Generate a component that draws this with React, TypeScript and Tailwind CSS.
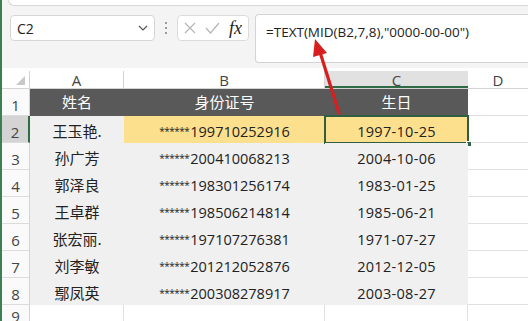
import React from 'react';

const rows = [
  ['王玉艳.', '199710252916', '1997-10-25'],
  ['孙广芳', '200410068213', '2004-10-06'],
  ['郭泽良', '198301256174', '1983-01-25'],
  ['王卓群', '198506214814', '1985-06-21'],
  ['张宏丽.', '197107276381', '1971-07-27'],
  ['刘李敏', '201212052876', '2012-12-05'],
  ['鄢凤英', '200308278917', '2003-08-27'],
];

const cjk = "font-['Noto_Sans_CJK_SC',sans-serif]";
const num = "font-['Open_Sans','Noto_Sans_CJK_SC',sans-serif]";

const RowHead: React.FC<{ n: number; active?: boolean; top?: boolean }> = ({ n, active, top }) => (
  <div
    className={`flex w-[28px] justify-center border-b border-[#dcdcdc] text-[15px] leading-none text-[#444] ${num} ${
      top ? 'items-start pt-[4px]' : 'items-end pb-[2px]'
    } ${active ? 'border-r-2 border-r-[#2f6b45] bg-[#d4d4d4]' : 'border-r border-r-[#d4d4d4] bg-[#fafafa]'}`}
  >
    {n}
  </div>
);

export default function App() {
  return (
    <div className="relative h-[321px] w-[528px] overflow-hidden border-l-2 border-[#3d7f55] bg-white">
      {/* toolbar */}
      <div className="h-[68px] bg-[#f4f4f4]">
        <div className="ml-[6px] h-[6px] rounded-bl-md border-b border-l border-[#d8d8d8] bg-white" />
        <div className="flex items-start">
          <div className="ml-[8px] mt-[9px] flex h-[26px] w-[145px] items-center justify-between rounded border border-[#d6d6d6] bg-white pl-[6px] pr-[6px]">
            <span className={`text-[14px] text-[#222] ${num}`}>C2</span>
            <svg width="10" height="6" viewBox="0 0 10 6">
              <path d="M1 1l4 4 4-4" fill="none" stroke="#555" strokeWidth="1.2" />
            </svg>
          </div>
          <div className="mt-[9px] flex h-[26px] w-[22px] flex-col items-center justify-center gap-[3px]">
            <div className="h-[2px] w-[2px] bg-[#999]" />
            <div className="h-[2px] w-[2px] bg-[#999]" />
            <div className="h-[2px] w-[2px] bg-[#999]" />
          </div>
          <div className="mt-[9px] flex h-[26px] w-[72px] items-center gap-[9px] rounded border border-[#dcdcdc] bg-white pl-[6px]">
            <svg width="12" height="12" viewBox="0 0 12 12">
              <path d="M1 1l10 10M11 1L1 11" stroke="#b5b5b5" strokeWidth="1.2" />
            </svg>
            <svg width="15" height="12" viewBox="0 0 15 12">
              <path d="M1 6l4.5 5L14 1" fill="none" stroke="#b5b5b5" strokeWidth="1.2" />
            </svg>
            <span className="font-['Liberation_Serif',serif] text-[18px] italic leading-none text-[#222]">fx</span>
          </div>
          <div className="ml-[6px] mt-[8px] h-[49px] flex-1 rounded-l border border-r-0 border-[#d4d4d4] bg-white pl-[10px] pt-[4px]">
            <span className={`text-[13.5px] text-[#222] ${num}`}>=TEXT(MID(B2,7,8),"0000-00-00")</span>
          </div>
        </div>
      </div>

      {/* column headers */}
      <div className={`mt-[3px] flex h-[18px] border-b border-[#d4d4d4] text-[15px] leading-[18px] text-[#444] ${num}`}>
        <div className="relative w-[28px] border-r border-[#d4d4d4]">
          <div className="absolute bottom-[3px] right-[4px] h-0 w-0 border-b-[9px] border-l-[9px] border-b-[#c8c8c8] border-l-transparent" />
        </div>
        <div className="w-[94px] border-r border-[#d4d4d4] text-center">A</div>
        <div className="w-[201px] border-r border-[#d4d4d4] text-center">B</div>
        <div className="w-[143px] border-b-2 border-[#2f6b45] bg-[#e1e1e1] text-center">C</div>
        <div className="flex-1 text-center">D</div>
      </div>

      {/* row 1 */}
      <div className="flex h-[27px]">
        <RowHead n={1} />
        <div className={`flex w-[438px] items-center bg-[#595959] text-[15px] text-white ${cjk}`}>
          <div className="w-[94px] text-center">姓名</div>
          <div className="w-[201px] text-center">身份证号</div>
          <div className="w-[143px] text-center">生日</div>
        </div>
        <div className="flex-1 border-b border-[#e0e0e0]" />
      </div>

      {rows.map(([name, id, date], i) => {
        const active = i === 0;
        return (
          <div key={i} className="flex h-[27px]">
            <RowHead n={i + 2} active={active} />
            <div className={`flex w-[94px] items-center justify-center bg-[#f0f0f0] pt-[4px] text-[15px] text-[#222] ${cjk}`}>
              {name}
            </div>
            <div
              className={`flex w-[201px] items-center justify-center pt-[4px] text-[14.5px] text-[#222] ${num} ${
                active ? 'bg-[#fde08e]' : 'bg-[#f0f0f0]'
              }`}
            >
              <span className="mr-[1px] text-[10px] tracking-[-0.5px]">******</span>
              {id}
            </div>
            <div
              className={`relative flex w-[143px] items-center justify-center pt-[4px] text-[14.5px] tracking-[0.3px] text-[#222] ${num} ${
                active ? 'bg-[#fde08e]' : 'bg-[#f0f0f0]'
              }`}
            >
              {date}
              {active && (
                <>
                  <div className="absolute inset-[-1px] border-2 border-[#2f5f40]" />
                  <div className="absolute bottom-[-4px] right-[-4px] h-[6px] w-[6px] border border-white bg-[#2f5f40]" />
                </>
              )}
            </div>
            <div className="flex-1 border-b border-[#e0e0e0]" />
          </div>
        );
      })}

      {/* row 9 */}
      <div className="flex h-[27px]">
        <RowHead n={9} top />
        <div className="w-[94px] border-r border-b border-[#e0e0e0]" />
        <div className="w-[201px] border-r border-b border-[#e0e0e0]" />
        <div className="w-[143px] border-r border-b border-[#e0e0e0]" />
        <div className="flex-1 border-b border-[#e0e0e0]" />
      </div>

      {/* red arrow */}
      <svg className="pointer-events-none absolute left-0 top-0" width="528" height="321">
        <line x1="337" y1="113" x2="318" y2="52" stroke="#d71f1f" strokeWidth="3.2" strokeLinecap="round" />
        <polygon points="313,39 311,57 325,53" fill="#d71f1f" />
      </svg>
    </div>
  );
}
